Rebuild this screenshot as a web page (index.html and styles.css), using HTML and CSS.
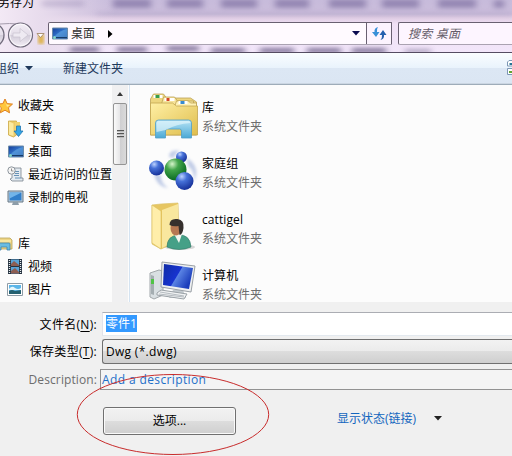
FILE: index.html
```html
<!DOCTYPE html>
<html lang="zh-CN">
<head>
<meta charset="utf-8">
<title>另存为</title>
<link rel="stylesheet" href="styles.css">
</head>
<body>
<div class="dialog">
  <header class="glass">
    <svg class="haze" width="512" height="52" viewBox="0 0 512 52">
      <defs><filter id="soft" x="-20%" y="-60%" width="140%" height="220%"><feGaussianBlur stdDeviation="3 2"/></filter></defs>
      <g filter="url(#soft)" fill="#77699b" opacity=".6">
        <rect x="42" y="0" width="42" height="7" opacity=".4"/><rect x="113" y="-1" width="38" height="9"/>
        <rect x="167" y="-1" width="36" height="9"/><rect x="221" y="-1" width="36" height="9"/>
        <rect x="275" y="-1" width="34" height="9"/><rect x="329" y="-1" width="37" height="9"/>
        <rect x="382" y="-1" width="37" height="9"/><rect x="438" y="-1" width="38" height="9"/>
        <rect x="494" y="0" width="10" height="8"/><rect x="96" y="12" width="416" height="4" opacity=".25"/>
      </g>
      <g filter="url(#soft)" fill="#62557f" opacity=".75">
        <rect x="70" y="47" width="29" height="5"/><rect x="117" y="47" width="30" height="5"/>
        <rect x="167" y="46" width="32" height="5"/><rect x="211" y="48" width="34" height="5"/>
        <rect x="260" y="48" width="34" height="5"/><rect x="307" y="48" width="34" height="5"/>
        <rect x="352" y="48" width="34" height="5"/><rect x="405" y="49" width="26" height="4" opacity=".6"/>
      </g>
    </svg>
    <div class="title">另存为</div>
    <nav class="navbar">
      <svg class="travel" width="46" height="30" viewBox="0 0 46 30">
        <defs>
          <linearGradient id="orb" x2="0" y2="1"><stop stop-color="#f3eef6"/><stop offset=".48" stop-color="#e4dee9"/><stop offset=".52" stop-color="#d3cdda"/><stop offset="1" stop-color="#f4eff7"/></linearGradient>
          <filter id="glow"><feGaussianBlur stdDeviation="1.6"/></filter>
        </defs>
        <path d="M0 4Q10 3 18 4" fill="none" stroke="#a59cac"/>
        <circle cx="-8" cy="15" r="12" fill="url(#orb)" stroke="#716b7c" stroke-width="1.3"/>
        <circle cx="20.500" cy="15" r="12" fill="url(#orb)" stroke="#716b7c" stroke-width="1.2"/>
        <circle cx="20.500" cy="15" r="10.800" fill="none" stroke="#fff" opacity=".8"/>
        <path d="M13 13h7V8.500l8 6.500-8 6.500V17h-7z" fill="#eeeaf2" stroke="#c9c3d0" stroke-width=".7"/>
        <rect x="38" y="14" width="6" height="10" fill="#dfb558" filter="url(#glow)"/>
        <path d="M37 13.500h7l-3.500 4z" fill="#fff" stroke="#9c8060" stroke-width=".8"/>
      </svg>
      <div class="address">
        <svg class="ico" width="16" height="14"><use href="#desk"/></svg>
        <span class="crumb">桌面</span>
        <svg class="crumb-arrow" width="5" height="8"><path d="M0 0l4.500 4L0 8z" fill="#000"/></svg>
        <svg class="drop" width="8" height="5"><path d="M0 0h8L4 4.500z" fill="#0b0b50"/></svg>
        <div class="refresh">
          <svg width="15" height="14" viewBox="0 0 15 14"><path d="M6 0Q2 1 2.500 5H0l4 5 3.500-5H5Q4.500 2 6 0z" fill="#388fd8"/><path d="M8.500 13q4-1 3.500-5h2.500L11 3 7.500 8H10q.3 3-1.500 5z" fill="#245fae"/></svg>
        </div>
      </div>
      <div class="search">搜索 桌面</div>
    </nav>
  </header>

  <div class="toolbar">
    <span class="organize">组织</span>
    <svg class="org-drop" width="8" height="5"><path d="M0 0h8L4 4.500z" fill="#1e395b"/></svg>
    <span class="new-folder">新建文件夹</span>
    <svg class="view" width="5" height="16" viewBox="0 0 5 16"><path d="M7 .5H2L.5 2v4h6M7 8.500H.5v6h6" fill="#fff" stroke="#7c97b4"/><path d="M2.500 5V3h3v2z" fill="#267494"/><path d="M2 13v-2h3v2z" fill="#62a333"/></svg>
  </div>

  <main class="panes">
    <ul class="tree">
      <li class="root"><svg width="18" height="18" viewBox="0 0 18 18"><path d="M8 2l2.100 4.600 5.400.5-4 3.600 1 5.100L8 13.200l-4.700 2.600 1-5.100-4-3.600 5.600-.5z" fill="#ffc63b" stroke="#df8124"/><path d="M8 4l1.500 3.500 3.500.5-3 2" fill="#ffe794"/></svg><span>收藏夹</span></li>
      <li><svg width="18" height="18" viewBox="0 0 18 18"><path d="M1.500 1h8v14l-3 2-5-2z" fill="#eccb68" stroke="#cba846" stroke-width=".8"/><path d="M2 1.500l4.500 2V16L2 14.500z" fill="#fbeaa0"/><path d="M8 2h5v12H8z" fill="#f0d372"/><path d="M9.500 6h4v5H16l-4.500 5.500L7 11h2.500z" fill="#35a5e5" stroke="#2176b1" stroke-width=".8"/></svg><span>下载</span></li>
      <li><svg width="18" height="18" viewBox="-1 -2 18 18"><use href="#desk"/></svg><span>桌面</span></li>
      <li><svg width="18" height="18" viewBox="0 0 18 18"><path d="M5 2h9v10h2v3H5l-2-2 2-1z" fill="#e3eaf0" stroke="#78838d" stroke-width=".8"/><path d="M7 5.500h5M8 7.500h4M7 9.500h5M8 12h6" stroke="#6792b6"/><circle cx="4.500" cy="4.500" r="3.700" fill="#f5f5f5" stroke="#8e969d"/><path d="M4.500 2.500v2.500h2" fill="none" stroke="#7a7a7a" stroke-width=".8"/></svg><span>最近访问的位置</span></li>
      <li><svg width="18" height="18" viewBox="0 0 18 18"><path d="M1 2h15v11H1z" fill="#c3d1dc" stroke="#647685"/><path d="M2.500 3.500h12v8h-12z" fill="#317fca"/><path d="M2.500 3.500h12l-12 6z" fill="#72b5e9"/><path d="M6 13h5l1 3H5z" fill="#8d9da9"/></svg><span>录制的电视</span></li>
      <li class="root library"><svg width="18" height="18" viewBox="0 0 18 18"><path d="M-3 4l1-2h4l1 1h10l2 2v9H-3z" fill="#eed584" stroke="#b8a35b" stroke-width=".8"/><path d="M-3 6H14" stroke="#fff6bd"/><path d="M-1 15V9q0-1 1-1h12q1 0 1 1v6H10v-3H4v3z" fill="#69bce2" stroke="#4187aa" stroke-width=".8"/></svg><span>库</span></li>
      <li><svg width="18" height="18" viewBox="0 0 18 18"><path d="M1 1h14v15H1z" fill="#263340"/><path d="M4 1.500h8v6.500H4zM4 9h8v6.500H4z" fill="#59a4d8"/><path d="M4 6l3-3 5 4v1H4zM4 13l4-3 4 4v1.500H4z" fill="#8d5e52"/><path d="M2.500 2v14M13.500 2v14" stroke="#e8edf0" stroke-width="1.300" stroke-dasharray="1 1"/></svg><span>视频</span></li>
      <li><svg width="18" height="18" viewBox="0 0 18 18"><path d="M.5 2.500h15v12H.5z" fill="#fff" stroke="#8e9ca6"/><path d="M2 4h12v9H2z" fill="#5cb6e9"/><path d="M2 8q3-4 6-1 3 2 6 0v2H2z" fill="#e5f6fb"/><path d="M2 10q3-2 6 0l6-1v4H2z" fill="#24606f"/></svg><span>图片</span></li>
    </ul>
    <div class="scroll">
      <svg width="6" height="4"><path d="M3 0l3 4H0z" fill="#383838"/></svg>
      <div class="thumb"><i></i><i></i><i></i></div>
      <svg class="down" width="7" height="4"><path d="M0 0h7L3.500 4z" fill="#383838"/></svg>
    </div>
    <ul class="files">
      <li>
        <svg width="52" height="52" viewBox="0 0 52 52">
          <defs><linearGradient id="yel" x2="1" y2="1"><stop stop-color="#fff0a5"/><stop offset="1" stop-color="#dfbd4c"/></linearGradient><linearGradient id="aqua" x2="0" y2="1"><stop stop-color="#b6e3f5"/><stop offset="1" stop-color="#4ba9d5"/></linearGradient></defs>
          <g transform="translate(.5 1)">
            <path d="M3 45V9l3-5h10l3 4h24l6 4v33z" fill="#edd67f" stroke="#bda255" stroke-width=".8"/>
            <path d="M14 14l2-7h11l3 4h16v10H14z" fill="#f7e49c" stroke="#bda255" stroke-width=".8"/>
            <path d="M27 17l2-6h12l2 2h6v10H27z" fill="#fff1b4" stroke="#bda255" stroke-width=".8"/>
            <path d="M6 5h9v3H6zM17 8h10v3H17zM31 11h9v3h-9z" fill="#fff"/><path d="M8 5h4v3H8z" fill="#379d48"/><path d="M19 8h3v3h-3z" fill="#d34422"/><path d="M33 11h4v3h-4z" fill="#398ace"/>
            <path d="M3 13h22l4 3h21v29H3z" fill="url(#yel)" stroke="#c3a650" stroke-width=".8"/>
            <path d="M8 48V33q0-3 3-3h30q3 0 3 3v15H34v-7q0-2-2-2H20q-2 0-2 2v7z" fill="url(#aqua)" stroke="#4f9fc9" stroke-width=".8"/>
            <path d="M9 42V33q0-2 2-2h30q2 0 2 2-14 1-25 7z" fill="#e5f7fc" opacity=".65"/>
          </g>
        </svg>
        <div><b>库</b><span>系统文件夹</span></div>
      </li>
      <li>
        <svg width="52" height="52" viewBox="0 0 52 52">
          <defs><radialGradient id="blue" cx=".35" cy=".25" r=".8"><stop stop-color="#bdd3ff"/><stop offset=".35" stop-color="#4671d8"/><stop offset="1" stop-color="#132c94"/></radialGradient><radialGradient id="green" cx=".35" cy=".25" r=".8"><stop stop-color="#d6f5ca"/><stop offset=".35" stop-color="#42a54a"/><stop offset="1" stop-color="#04631d"/></radialGradient></defs>
          <path d="M7 29Q10 42 21 43 13 37 14 30zM40 13q14 9 7 23 1-10-6-15zM22 12Q22 4 33 6q-5 2-6 7z" fill="#aebde0" opacity=".75" filter="url(#glow)"/><circle cx="34.500" cy="12" r="5.500" fill="url(#blue)"/><circle cx="9.500" cy="23" r="7.500" fill="url(#blue)"/><circle cx="28.500" cy="24.500" r="11" fill="url(#green)"/><circle cx="37.500" cy="36" r="9" fill="url(#blue)"/>
        </svg>
        <div><b>家庭组</b><span>系统文件夹</span></div>
      </li>
      <li>
        <svg width="52" height="52" viewBox="0 0 52 52">
          <ellipse cx="33" cy="46" rx="15" ry="3" fill="#d6d6d6"/><path d="M5 4l9-1 17-1 1 38-18 8-9-5z" fill="#e7c661" stroke="#dcc36c" stroke-width=".7"/><path d="M15 9l16-6v36l-16 8z" fill="#f9e79e"/><path d="M5 4l9 6v38l-9-6z" fill="#ffeeaa" stroke="#d9bd5b" stroke-width=".6"/><path d="M20 46q0-11 11-12 12-1 13 12-12 5-24 0z" fill="#45a087" stroke="#2b7763" stroke-width=".6"/><path d="M27 33h8l-3 9z" fill="#f2f5ef"/><ellipse cx="29" cy="27" rx="5.500" ry="7.500" fill="#b77852"/><path d="M22.500 24q0-7 8-6 7 1 6 9-1 7-4 7l-1-9q-5 1-9-1z" fill="#36302d"/>
        </svg>
        <div><b>cattigel</b><span>系统文件夹</span></div>
      </li>
      <li>
        <svg width="52" height="52" viewBox="0 0 52 52">
          <defs><linearGradient id="screen" x2="1" y2=".5"><stop stop-color="#0f2ca4"/><stop offset=".55" stop-color="#1733d0"/><stop offset=".58" stop-color="#5a83e4"/><stop offset="1" stop-color="#1b3dbb"/></linearGradient></defs>
          <path d="M3 16l9-3 4 1v24l-9 4-4-2z" fill="#d9dfe2" stroke="#a1a7aa"/><path d="M4 18l3 1v19l-3-1z" fill="#a4adb1"/><path d="M4 22h3v5H4z" fill="#50c445"/><path d="M26 33h10l3 8H22z" fill="#c4cbd0"/><path d="M15 5l33 4-4 26-30-5z" fill="#eef0f1" stroke="#9aa0a6"/><path d="M17 7l29 4-4 21-26-4z" fill="url(#screen)"/><path d="M10 36l4-3 26 4-3 5-27-4z" fill="#f1f3f4" stroke="#9ba2a7"/><path d="M13 35l24 4M12 37l25 3" stroke="#b5bbc0"/>
        </svg>
        <div><b>计算机</b><span>系统文件夹</span></div>
      </li>
    </ul>
  </main>

  <form class="fields">
    <label class="name">文件名(<u>N</u>):</label>
    <div class="filename"><mark>零件1</mark></div>
    <label class="type">保存类型(<u>T</u>):</label>
    <div class="filetype">Dwg (*.dwg)</div>
    <label class="desc">Description:</label>
    <div class="description">Add a description</div>
    <div class="actions">
      <div class="options">选项...</div>
      <span class="state">显示状态(链接)</span>
      <svg width="8" height="5"><path d="M0 0h8L4 4.500z" fill="#222"/></svg>
    </div>
  </form>
  <svg class="ring" width="194" height="84" viewBox="0 0 194 84"><ellipse cx="97" cy="41.500" rx="95.700" ry="40" fill="none" stroke="#c82c2c" stroke-width="1"/></svg>
</div>
<svg class="defs" width="0" height="0">
  <defs><linearGradient id="deskfill" x2="1" y2="1"><stop stop-color="#153e9b"/><stop offset=".5" stop-color="#3475cb"/><stop offset="1" stop-color="#1b4796"/></linearGradient></defs>
  <symbol id="desk" viewBox="0 0 16 14" width="16" height="14"><path d="M.5 1h15v11H.5z" fill="url(#deskfill)" stroke="#6c8ba8"/><path d="M2 10q6-7 13-8v8z" fill="#66a9e2" opacity=".55"/><path d="M1 10.500h14" stroke="#163c68"/><circle cx="2.500" cy="10.500" r="1.500" fill="#81d4c6"/></symbol>
</svg>
</body>
</html>
```
FILE: styles.css
```css
* { box-sizing: border-box; }
body {
  margin: 0;
  overflow: hidden;
  font: 12px/18px "Open Sans", "Noto Sans CJK SC", sans-serif;
  color: #000;
}
ul { margin: 0; padding: 0; list-style: none; }
svg { display: block; flex: none; }
.defs { position: absolute; }
.dialog {
  position: relative;
  display: flex;
  flex-direction: column;
  width: 512px;
  height: 456px;
  overflow: hidden;
  background: #f0f0f0;
}
.glass {
  position: relative;
  height: 53px;
  overflow: hidden;
  border-bottom: 1px solid #554c62;
  background: linear-gradient(#c7bbdb, #cbbddb 14px, #e0cee4 18px, #f0e0f5 24px, #f2e6fa);
}
.glass::before {
  content: "";
  position: absolute;
  inset: 0;
  background: linear-gradient(90deg, #f3e9f5 0, #e8dced 40px, transparent 115px);
}
.haze { position: absolute; left: 0; top: 0; }
.title {
  position: relative;
  height: 18px;
  margin: -6px 0 0 -2px;
}
.navbar { position: relative; display: flex; align-items: center; height: 30px; margin-top: 6px; }
.travel { margin: 2px 2px 0 0; }
.navbar .travel { align-self: flex-start; }
.address, .search {
  height: 23px;
  margin-top: 1px;
  border: 1px solid #696071;
  border-bottom-color: #aaa2b1;
  background: #fffaff;
}
.address { display: flex; align-items: center; width: 344px; padding-left: 3px; border-radius: 2px 1px 1px 2px; }
.crumb { margin-left: 3px; color: #333; }
.crumb-arrow { margin-left: 13px; }
.drop { margin-left: auto; }
.refresh { display: flex; align-items: center; justify-content: center; width: 25px; height: 21px; margin-left: 6px; border-left: 1px solid #696071; background: #fcf3fe; }
.search { flex: 1; margin-left: 6px; padding-left: 9px; border-right: 0; border-radius: 2px 0 0 2px; font-style: italic; letter-spacing: .2px; line-height: 21px; color: #665e6b; background: #fdf5ff; }
.toolbar {
  display: flex;
  align-items: center;
  height: 32px;
  border-bottom: 1px solid #9eacb9;
  box-shadow: inset 0 -1px #cbd6e2;
  color: #1e395b;
  background: linear-gradient(#fafdff, #e9f3fc 15px, #dce7f4 15px, #dbe6f3);
}
.organize { margin-left: -5px; }
.org-drop { margin-left: 6px; }
.new-folder { margin-left: 30px; }
.view { margin: 0 0 2px auto; }
.panes { display: grid; grid-template-columns: 112px 16px 384px; height: 217px; overflow: hidden; background: #fcfcfc; }
.tree { padding-top: 9px; overflow: hidden; }
.tree li { display: flex; align-items: center; height: 23px; padding-left: 7px; white-space: nowrap; }
.tree span { margin-left: 3px; }
.tree .root { padding-left: 0; margin-left: -3px; }
.tree .library { margin-top: 23px; }
.scroll { display: flex; flex-direction: column; align-items: center; padding: 7px 1px 6px; background: #f0f0f1; }
.thumb {
  display: flex; flex-direction: column; justify-content: center; align-items: center; gap: 1px;
  width: 14px; height: 62px; margin-top: 7px;
  border: 1px solid #949494; border-radius: 2px;
  background: linear-gradient(90deg, #fafafa, #e5e5e7 50%, #cfcfd1 51%, #dadada);
}
.thumb i { width: 7px; height: 2px; background: #555; border-bottom: 1px solid #bbb; }
.down { margin-top: auto; }
.files { margin-left: 1px; padding: 4px 0 0 17px; border-left: 1px solid #d4e3f1; }
.files li { display: flex; height: 56px; align-items: flex-start; }
.files li > div { display: flex; flex-direction: column; margin: 9px 0 0 3px; }
.files b { height: 19px; font-weight: 400; line-height: 19px; letter-spacing: .1px; }
.files span { line-height: 19px; color: #6d6d6d; }
.fields {
  display: grid;
  grid-template-columns: 97px 415px;
  grid-template-rows: 24px 25px 21px 1fr;
  row-gap: 3px;
  flex: 1;
  padding-top: 10px;
}
label { text-align: right; white-space: nowrap; line-height: 25px; letter-spacing: .3px; }
u { text-underline-offset: 2px; }
.filename { margin-left: 5px; padding: 2px 3px; border: 1px solid #abadb3; border-right: 0; border-left-color: #e2e3ea; border-bottom-color: #e3e9ef; background: #fff; }
mark { display: inline-block; height: 17px; line-height: 17px; color: #fff; background: #3399ff; }
.filetype { margin-left: 5px; padding-left: 3px; border: 1px solid #707070; border-right: 0; border-radius: 3px 0 0 3px; line-height: 24px; letter-spacing: .3px; background: linear-gradient(#f2f2f2, #ebebeb 49%, #ddd 50%, #cfcfcf); }
.desc { color: #6d6d6d; line-height: 21px; letter-spacing: .1px; }
.description { margin-left: 3px; padding-left: 1px; border: 1px solid #929292; border-right: 0; line-height: 20px; letter-spacing: .38px; color: #1e6fc8; background: #f4f4f4; }
.fields .desc, .fields .description { margin-top: 2px; height: 21px; }
.actions { grid-column: 1 / -1; display: flex; align-items: flex-start; padding: 16px 0 0 103px; }
.options { width: 133px; height: 28px; border: 1px solid #707070; border-radius: 3px; box-shadow: inset 0 0 0 1px #fafafa; text-align: center; line-height: 26px; background: linear-gradient(#f2f2f2, #ebebeb 49%, #ddd 50%, #cfcfcf); }
.state { margin: 2px 0 0 101px; line-height: 20px; color: #1366be; }
.actions svg { margin: 9px 0 0 18px; }
.ring { position: absolute; left: 76px; top: 373px; }
```
